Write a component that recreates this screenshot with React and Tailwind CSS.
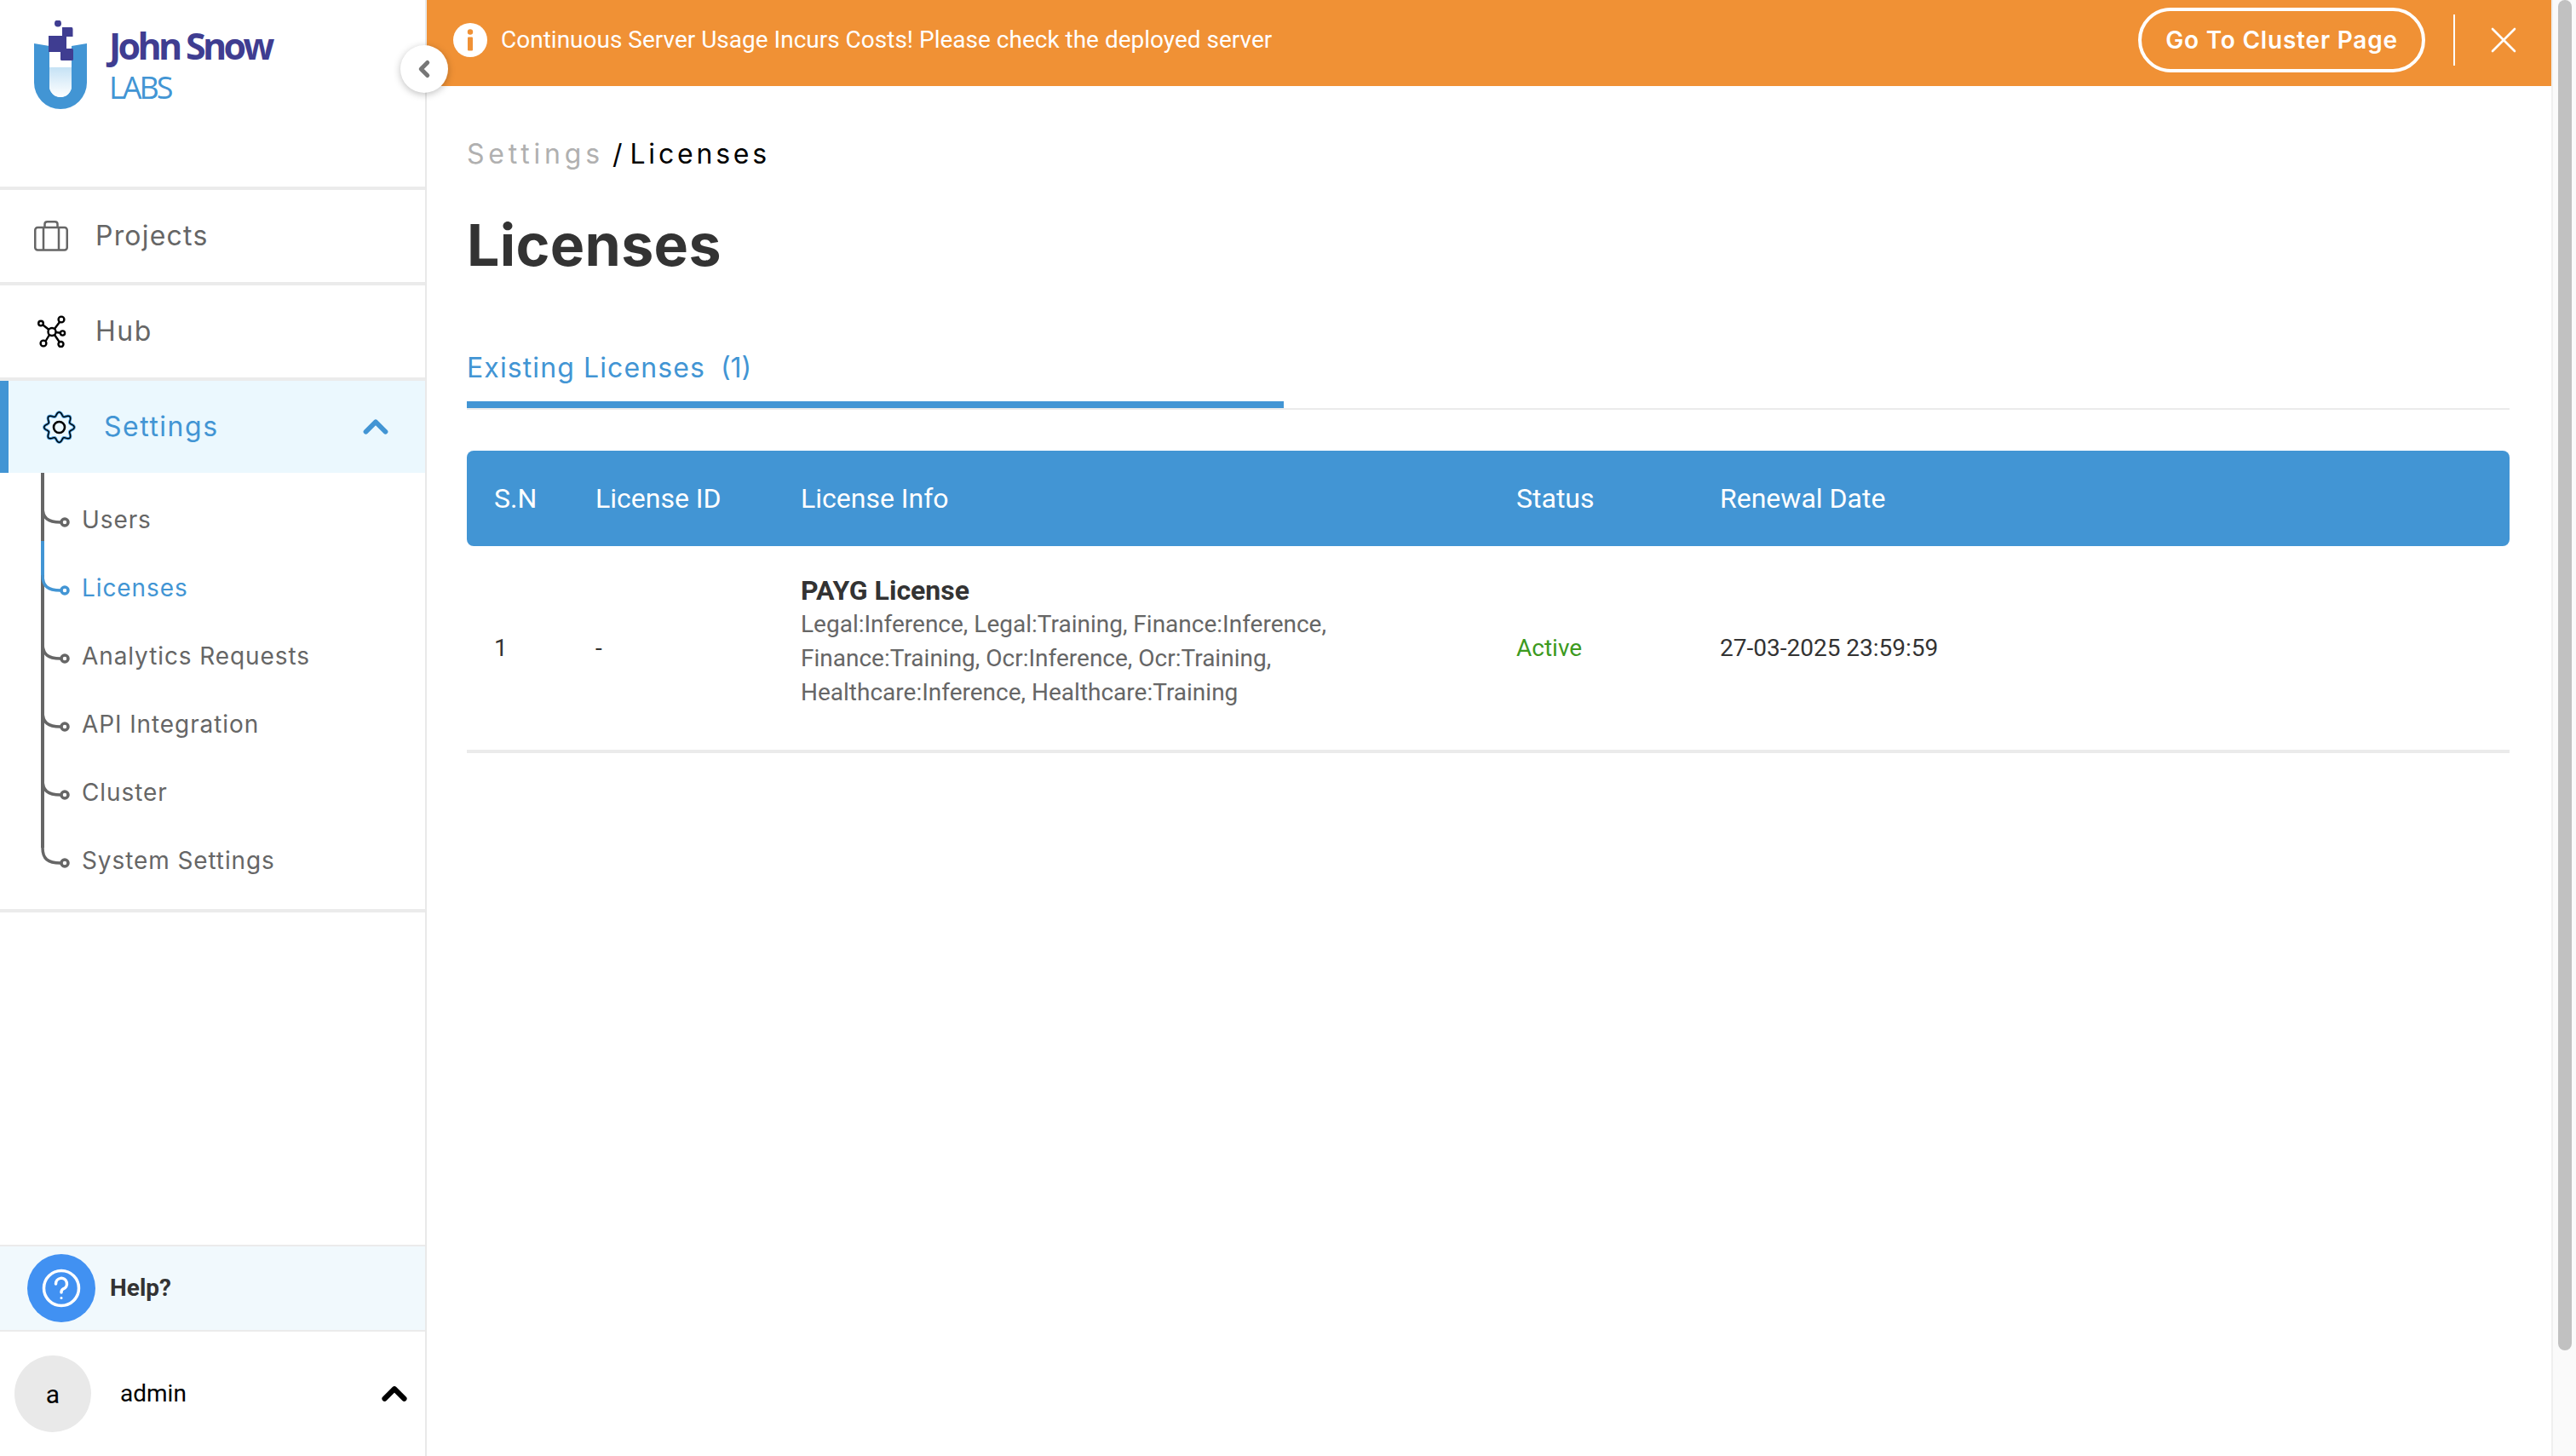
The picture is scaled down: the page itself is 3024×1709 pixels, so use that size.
import React from 'react';
import { ChevronLeft, ChevronUp, X } from 'lucide-react';

const BLUE = '#4295d4';
const subItems = ['Users', 'Licenses', 'Analytics Requests', 'API Integration', 'Cluster', 'System Settings'];

function Logo() {
    return (
        <svg width="66" height="104" viewBox="0 0 66 104" className="shrink-0">
            <defs>
                <linearGradient id="tube" x1="0" y1="0" x2="0" y2="1">
                    <stop offset="0" stopColor="#c5e2f5" />
                    <stop offset="1" stopColor="#ffffff" />
                </linearGradient>
            </defs>
            <path d="M0 27 L18 30 V77 A13 13 0 0 0 44 77 V30 L62 27 V73 A31 31 0 0 1 0 73 Z" fill={BLUE} />
            <path d="M18 55 H44 V77 A13 13 0 0 1 18 77 Z" fill="url(#tube)" />
            <circle cx="28" cy="3.500" r="4" fill="#3f3d91" />
            <path d="M33 8 H44 Q45.500 8 45.500 10 V19 H38 V37 H17 V18 H33 Z" fill="#3f3d91" />
            <rect x="31" y="33" width="15" height="14" rx="1.500" fill="#3f3d91" />
        </svg>
    );
}

function BriefcaseIcon() {
    return (
        <svg width="40" height="36" viewBox="0 0 40 36" fill="none" stroke="#666" strokeWidth="2.500">
            <rect x="1.250" y="8" width="37.500" height="26.500" rx="3" />
            <path d="M11 8 V34 M29 8 V34" />
            <path d="M12.500 8 V4 Q12.500 1.250 15.500 1.250 H24.500 Q27.500 1.250 27.500 4 V8" />
        </svg>
    );
}

function HubIcon() {
    return (
        <svg width="34" height="38" viewBox="0 0 34 38" fill="none" stroke="#000" strokeWidth="2.400">
            <circle cx="17" cy="19.500" r="4.500" />
            <circle cx="4" cy="9.500" r="2.800" />
            <circle cx="28" cy="5" r="3.400" />
            <circle cx="29.500" cy="21" r="2.600" />
            <circle cx="7" cy="33" r="3.400" />
            <circle cx="27.500" cy="34" r="3" />
            <path d="M6.500 11.500 L13.500 17 M26 8 L20 16 M27 20.800 L21.500 20 M9.500 30.500 L14 23 M25.800 31.500 L20 23" />
        </svg>
    );
}

// eight lobed outline, same shape for the blue halo and the black stroke
function gearPath() {
    const pts = [];
    for (let i = 0; i <= 160; i++) {
        const a = (i / 160) * Math.PI * 2;
        const r = 15.500 + 2.200 * Math.cos(a * 8);
        pts.push(`${(19.500 + r * Math.sin(a)).toFixed(2)} ${(19.500 - r * Math.cos(a)).toFixed(2)}`);
    }
    return 'M' + pts.join(' L') + ' Z';
}

function GearIcon() {
    const d = gearPath();
    return (
        <svg width="39" height="39" viewBox="0 0 39 39" fill="none">
            <path d={d} stroke={BLUE} strokeWidth="3.200" />
            <path d={d} stroke="#000" strokeWidth="1.400" />
            <circle cx="19.500" cy="19.500" r="6.500" stroke="#000" strokeWidth="2.600" />
        </svg>
    );
}

function TreeRow({ label, active, first, last }) {
    const color = active ? BLUE : '#666';
    return (
        <div className={`flex h-20 items-center text-[28px] tracking-[0.900px] [font-family:Inter,sans-serif] ${active ? 'text-[#4295d4]' : 'text-[#666]'}`}>
            <svg width="96" height="80" viewBox="0 0 96 80" fill="none" className="shrink-0 overflow-visible">
                {!last && <path d={first ? 'M50 -15 V80' : 'M50 0 V80'} stroke="#666" strokeWidth="4" />}
                {last && <path d="M50 0 V25" stroke="#666" strokeWidth="4" />}
                {active && <path d="M50 -15 V25" stroke={BLUE} strokeWidth="4" />}
                <path d="M50 25 C50 38 56 43 71 43" stroke={color} strokeWidth="3.500" />
                <circle cx="76" cy="43" r="4" stroke={color} strokeWidth="3.500" fill="#fff" />
            </svg>
            <span>{label}</span>
        </div>
    );
}

function Sidebar() {
    return (
        <aside className="relative z-10 flex h-full w-[501px] shrink-0 flex-col border-r-2 border-[#e9e9e9] bg-white [font-family:Inter,sans-serif]">
            <div className="flex h-[223px] shrink-0 items-start border-b-4 border-[#ebebeb] pl-10 pt-[24px]">
                <Logo />
                <div className="ml-[22px] mt-[5px] flex flex-col [font-family:'Open_Sans',sans-serif]">
                    <span className="text-[43px] leading-[50px] font-bold tracking-[-3.700px] text-[#3f3d91]">John Snow</span>
                    <span className="mt-[2px] text-[36px] leading-[44px] font-normal tracking-[-3px] text-[#4295d4]">LABS</span>
                </div>
            </div>

            <div className="flex h-28 shrink-0 items-center gap-[32px] border-b-4 border-[#ebebeb] pl-10 text-[32px] tracking-[1.200px] text-[#666]">
                <BriefcaseIcon />
                <span>Projects</span>
            </div>
            <div className="flex h-28 shrink-0 items-center gap-[34px] border-b-4 border-[#ebebeb] pl-[44px] text-[32px] tracking-[1.500px] text-[#666]">
                <HubIcon />
                <span>Hub</span>
            </div>

            <div className="flex h-[108px] shrink-0 items-center border-l-[10px] border-[#4295d4] bg-[#ebf8fe] pl-[40px] pr-[35px] text-[32px] tracking-[1.500px] text-[#4295d4]">
                <GearIcon />
                <span className="ml-[33px] flex-1">Settings</span>
                <ChevronUp size={46} strokeWidth={3} color={BLUE} />
            </div>

            <div className="shrink-0 border-b-4 border-[#ebebeb] pb-[17px] pt-[15px]">
                {subItems.map((item, i) => (
                    <TreeRow key={item} label={item} active={item === 'Licenses'} first={i === 0} last={i === subItems.length - 1} />
                ))}
            </div>

            <div className="flex-1" />

            <div className="flex h-[102px] shrink-0 items-center gap-[17px] border-y-2 border-[#ebebeb] bg-[#f1f9fd] pl-8 [font-family:Roboto,sans-serif]">
                <div className="flex h-20 w-20 items-center justify-center rounded-full bg-[#4191f2]">
                    <svg width="46" height="46" viewBox="0 0 46 46" fill="none" stroke="#fff" strokeWidth="3.500">
                        <circle cx="23" cy="23" r="20.500" />
                        <path d="M16.500 18 A6.500 6.500 0 1 1 25 24 Q23 25 23 28" strokeLinecap="round" />
                        <circle cx="23" cy="34.500" r="1.500" fill="#fff" stroke="none" />
                    </svg>
                </div>
                <span className="text-[28px] font-bold text-[#333]">Help?</span>
            </div>

            <div className="flex h-[146px] shrink-0 items-center pl-[17px] pr-[13px] [font-family:Roboto,sans-serif]">
                <div className="flex h-[90px] w-[90px] items-center justify-center rounded-full bg-[#e9e9e9] text-[30px] text-black">a</div>
                <span className="ml-[34px] flex-1 text-[28px] text-black">admin</span>
                <ChevronUp size={46} strokeWidth={3.200} color="#000" />
            </div>

            <button className="absolute left-[470px] top-[53px] flex h-14 w-14 items-center justify-center rounded-full bg-white shadow-[0_2px_8px_rgba(0,0,0,0.25)]">
                <ChevronLeft size={30} strokeWidth={4} color="#777" />
            </button>
        </aside>
    );
}

function Banner() {
    return (
        <div className="flex h-[101px] shrink-0 items-center bg-[#f09135] pb-[8px] pl-[30px] pr-[30px] text-white [font-family:Roboto,sans-serif]">
            <svg width="42" height="42" viewBox="0 0 42 42" className="shrink-0">
                <circle cx="21" cy="21" r="20" fill="#fff" />
                <circle cx="21" cy="11.500" r="3.200" fill="#f09135" />
                <rect x="18" y="17.500" width="6" height="16" rx="1" fill="#f09135" />
            </svg>
            <span className="ml-[15px] flex-1 text-[28px]">Continuous Server Usage Incurs Costs! Please check the deployed server</span>
            <button className="flex h-[76px] w-[337px] items-center justify-center rounded-full border-4 border-white text-[28px] font-semibold tracking-[0.800px] [font-family:Inter,sans-serif]">
                Go To Cluster Page
            </button>
            <div className="ml-[33px] mr-[31px] h-[60px] w-[2px] bg-white" />
            <X size={52} strokeWidth={1.200} color="#fff" />
        </div>
    );
}

function LicenseTable() {
    return (
        <div className="mt-[48px] [font-family:Roboto,sans-serif]">
            <div className="grid h-[112px] grid-cols-[119px_241px_840px_239px_1fr] items-center rounded-lg bg-[#4295d4] pl-8 text-[32px] font-normal text-white">
                <span>S.N</span>
                <span>License ID</span>
                <span>License Info</span>
                <span>Status</span>
                <span>Renewal Date</span>
            </div>
            <div className="grid h-[243px] grid-cols-[119px_241px_840px_239px_1fr] items-center border-b-4 border-[#ebebeb] pl-8 text-[28px] text-[#333]">
                <span>1</span>
                <span>-</span>
                <div className="pb-4">
                    <div className="text-[32px] leading-[40px] font-bold text-[#333]">PAYG License</div>
                    <div className="leading-[40px] text-[#666]">
                        Legal:Inference, Legal:Training, Finance:Inference,
                        <br />
                        Finance:Training, Ocr:Inference, Ocr:Training,
                        <br />
                        Healthcare:Inference, Healthcare:Training
                    </div>
                </div>
                <span className="text-[#3c9a1e]">Active</span>
                <span>27-03-2025 23:59:59</span>
            </div>
        </div>
    );
}

function Scrollbar() {
    return (
        <div className="h-full w-[29px] shrink-0 border-l-2 border-[#efefef] bg-[#fafafa] pl-[6px]">
            <div className="h-[1585px] w-4 rounded-full bg-[#c1c1c1]" />
        </div>
    );
}

export default function App() {
    return (
        <div className="flex h-screen w-full overflow-hidden bg-white">
            <Sidebar />
            <div className="flex min-w-0 flex-1 flex-col">
                <Banner />
                <main className="flex-1 pl-[47px] pr-[49px] pt-[56px]">
                    <div className="flex h-12 items-center text-[32px] [font-family:Inter,sans-serif]">
                        <span className="tracking-[4.800px] text-[#b0b0b0]">Settings</span>
                        <span className="ml-[10px] text-black">/</span>
                        <span className="ml-[9px] tracking-[3.800px] text-black">Licenses</span>
                    </div>
                    <h1 className="mt-[42px] text-[68px] leading-[80px] font-bold tracking-[0.300px] text-[#333] [font-family:Inter,sans-serif]">Licenses</h1>
                    <div className="mt-[70px] border-b-2 border-[#ebebeb]">
                        <div className="flex h-[82px] w-[959px] items-center gap-[18px] border-b-8 border-[#4295d4] pb-1 text-[32px] text-[#4295d4] [font-family:Inter,sans-serif]">
                            <span className="tracking-[1.100px]">Existing Licenses</span>
                            <span>(1)</span>
                        </div>
                    </div>
                    <LicenseTable />
                </main>
            </div>
            <Scrollbar />
        </div>
    );
}
